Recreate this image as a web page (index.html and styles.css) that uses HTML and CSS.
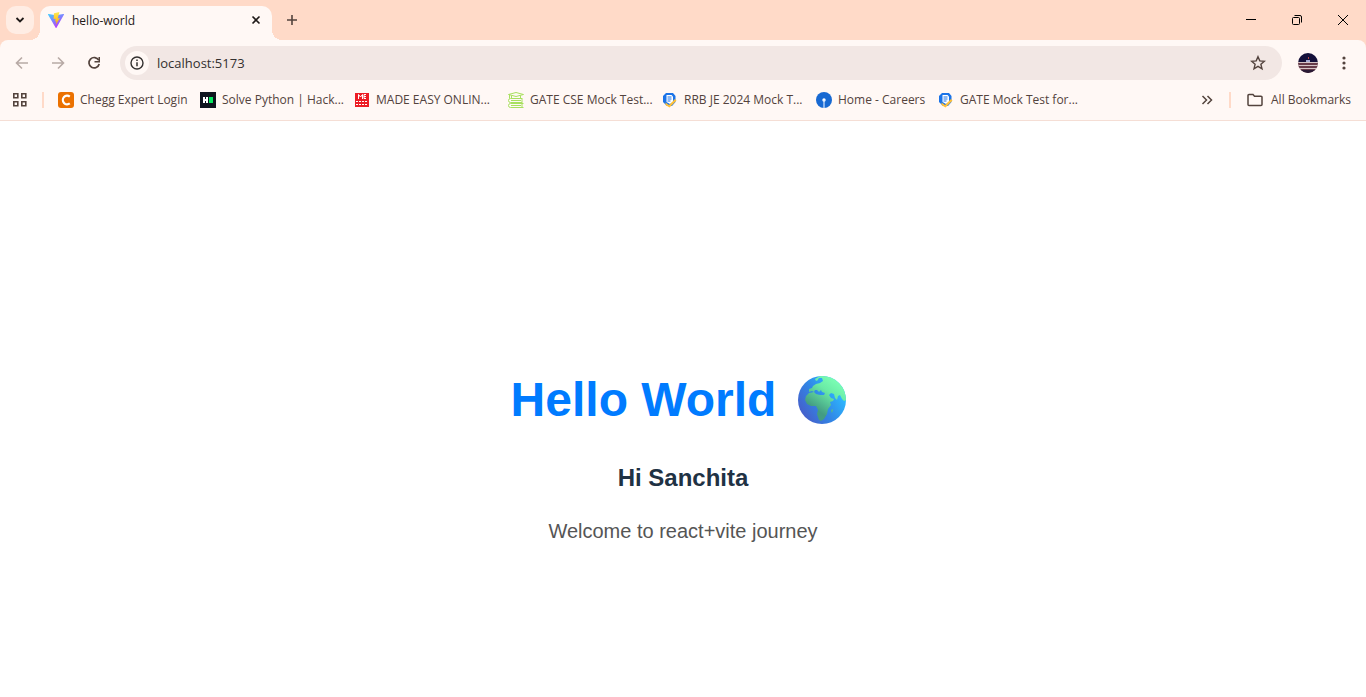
FILE: index.html
```html
<!DOCTYPE html>
<html lang="en">
<head>
<meta charset="utf-8">
<title>hello-world</title>
<link rel="stylesheet" href="styles.css">
</head>
<body>
<header class="browser">
  <div class="tabstrip">
    <button class="tab-search" aria-label="Search tabs"><svg width="10" height="8" viewBox="0 0 10 8"><path d="M1.5 2l3.5 3.500L8.500 2" fill="none" stroke="#1f1a18" stroke-width="1.800"/></svg></button>
    <div class="tab">
      <svg width="16" height="16" viewBox="0 0 32 32"><defs><linearGradient id="vite" x1="0" y1="0" x2=".6" y2="1"><stop offset="0" stop-color="#41d1ff"/><stop offset="1" stop-color="#bd34fe"/></linearGradient><linearGradient id="bolt" x1="0" y1="0" x2="0" y2="1"><stop offset="0" stop-color="#ffea53"/><stop offset="1" stop-color="#ffa800"/></linearGradient></defs><path d="M31.800 5.300L17 31.500a1 1 0 0 1-1.700 0L.2 5.300a1 1 0 0 1 1-1.500L16 6.500l14.700-2.700a1 1 0 0 1 1.100 1.500z" fill="url(#vite)"/><path d="M22.800.2L12 2.300l-.8 11.900 4-.8-1 5.800 2.600-.8-1.500 7.800L23.800 12l-4.300.8z" fill="url(#bolt)"/></svg>
      <span class="tab-title">hello-world</span>
      <button class="tab-close" aria-label="Close tab"><svg width="10" height="10" viewBox="0 0 10 10"><path d="M1.500 1.500l7 7M8.500 1.500l-7 7" stroke="#1f1a18" stroke-width="1.600"/></svg></button>
    </div>
    <button class="new-tab" aria-label="New tab"><svg width="12" height="12" viewBox="0 0 12 12"><path d="M6 1v10M1 6h10" stroke="#53433d" stroke-width="1.600"/></svg></button>
    <div class="window-controls">
      <button aria-label="Minimize"><svg width="12" height="12" viewBox="0 0 12 12"><path d="M1 5.500h10" stroke="#000"/></svg></button>
      <button aria-label="Restore"><svg width="12" height="12" viewBox="0 0 12 12" fill="none" stroke="#000"><rect x="1.500" y="3.500" width="7" height="7" rx="1"/><path d="M3.500 1.500H9a1.500 1.500 0 0 1 1.500 1.500v5.500"/></svg></button>
      <button aria-label="Close"><svg width="12" height="12" viewBox="0 0 12 12"><path d="M1 1l10 10M11 1L1 11" stroke="#000"/></svg></button>
    </div>
  </div>

  <div class="toolbar">
    <button class="tool" aria-label="Back"><svg width="16" height="16" viewBox="0 0 16 16" fill="none" stroke="#b8aaa5" stroke-width="1.600"><path d="M14 8H3M8 2.500L2.500 8 8 13.500"/></svg></button>
    <button class="tool" aria-label="Forward"><svg width="16" height="16" viewBox="0 0 16 16" fill="none" stroke="#b8aaa5" stroke-width="1.600"><path d="M2 8h11M8 2.500L13.500 8 8 13.500"/></svg></button>
    <button class="tool" aria-label="Reload"><svg width="16" height="16" viewBox="0 0 16 16"><path d="M12.700 5.200A5.200 5.200 0 1 0 13.200 9" fill="none" stroke="#53433d" stroke-width="1.700"/><path d="M14 2v5.500H8.500V6h4V2z" fill="#53433d"/></svg></button>
    <div class="omnibox">
      <button class="site-info" aria-label="View site information"><svg width="14" height="14" viewBox="0 0 14 14"><circle cx="7" cy="7" r="6" fill="none" stroke="#33302f" stroke-width="1.400"/><path d="M7 6.200v4M7 3.600v1.500" stroke="#33302f" stroke-width="1.500"/></svg></button>
      <input class="url" type="text" value="localhost:5173" aria-label="Address">
      <button class="star" aria-label="Bookmark this page"><svg width="16" height="16" viewBox="0 0 16 16"><path d="M8 1.700l1.800 4.200 4.600.4-3.500 3 1.100 4.500L8 11.400l-4 2.400 1.100-4.500-3.500-3 4.600-.4z" fill="none" stroke="#53433d" stroke-width="1.400"/></svg></button>
    </div>
    <button class="avatar" aria-label="Profile"><svg width="20" height="20" viewBox="0 0 20 20"><clipPath id="round"><circle cx="10" cy="10" r="10"/></clipPath><g clip-path="url(#round)"><path fill="#14103a" d="M0 0h20v9H0z"/><path fill="#663b49" d="M0 9h20v11H0z"/><path fill="#d5c4c6" d="M0 9h20v1H0zM0 12h20v1H0zM1 15h18v1H1z"/><path fill="#b54646" d="M10 4h1v2h-1z"/><path fill="#a5aad4" d="M8 7h4v2H8z"/><path fill="#2a1a35" d="M2 17h16v3H2z"/></g></svg></button>
    <button class="menu" aria-label="Menu"><svg width="4" height="14" viewBox="0 0 4 14" fill="#53433d"><circle cx="2" cy="2" r="1.600"/><circle cx="2" cy="7" r="1.600"/><circle cx="2" cy="12" r="1.600"/></svg></button>
  </div>

  <nav class="bookmarks" aria-label="Bookmarks">
    <button class="apps" aria-label="Apps"><svg width="16" height="16" viewBox="0 0 16 16" fill="none" stroke="#53433d" stroke-width="1.600"><path d="M1.800 1.800h4v4h-4zM9.800 1.800h4v4h-4zM1.800 9.800h4v4h-4zM9.800 9.800h4v4h-4z"/></svg></button>
    <span class="divider"></span>
    <div class="links">
      <a class="bookmark medium" href="#"><svg width="16" height="16" viewBox="0 0 16 16"><rect width="16" height="16" rx="3" fill="#eb7100"/><path d="M11.800 4.600A4.300 4.300 0 1 0 11.800 11.400" fill="none" stroke="#fff" stroke-width="2.200"/></svg>Chegg Expert Login</a>
      <a class="bookmark" href="#"><svg width="16" height="16" viewBox="0 0 16 16"><path fill="#0e141e" d="M0 0h16v16H0z"/><path fill="#fff" d="M3 5h2v2h1V5h2v6H6V9H5v2H3z"/><path fill="#05e860" d="M9 5h4v6H9z"/></svg>Solve Python | Hack...</a>
      <a class="bookmark" href="#"><svg width="16" height="16" viewBox="0 0 16 16"><path fill="#ed1c24" d="M1 1h14v14H1z"/><path fill="none" stroke="#fff" d="M4.500 7V2.500L6.500 5l2-2.500V7M12 2.500h-2v4h2M10 4.500h2"/><path stroke="#fff" stroke-dasharray="2 1" d="M2 9.500h12M2 12.500h12"/></svg>MADE EASY ONLIN...</a>
      <a class="bookmark" href="#"><svg width="16" height="16" viewBox="0 0 16 16" fill="none" stroke="#a8e05f"><path d="M.5 2.500L8 .5l7.500 2L8 4.500zM3.500 3.500v3h9v-3M1.500 2.500v4M14.500 6.500h-12a1.500 1.500 0 0 0 0 4h12M14 7v3M3 8.500h10M15.500 11.500h-13a2 2 0 0 0 0 4h13M14 12v3M3 13.500h10"/></svg>GATE CSE Mock Test...</a>
      <a class="bookmark" href="#"><svg width="16" height="16" viewBox="0 0 16 16"><path d="M4 1h7l2.500 3v6L10 14H5l-4-4V4z" fill="#1a73e8"/><path d="M4.500 3h5L11 4.500V10L8 12l-3.500-2z" fill="#fff"/><path d="M5.500 5h4M5.500 7h4M5.500 9h3" stroke="#1a73e8"/><path d="M3.500 10.500L7 13l6-6 1.500 1.500-7 7-4-2.500z" fill="#ffc038"/></svg>RRB JE 2024 Mock T...</a>
      <a class="bookmark short" href="#"><svg width="16" height="16" viewBox="0 0 16 16"><circle cx="8" cy="8" r="8" fill="#1769d2"/><circle cx="8" cy="8" r="1.700" fill="#fff"/><path d="M8 8v8" stroke="#d6e7ff" stroke-width="1.200"/></svg>Home - Careers</a>
      <a class="bookmark" href="#"><svg width="16" height="16" viewBox="0 0 16 16"><path d="M4 1h7l2.500 3v6L10 14H5l-4-4V4z" fill="#1a73e8"/><path d="M4.500 3h5L11 4.500V10L8 12l-3.500-2z" fill="#fff"/><path d="M5.500 5h4M5.500 7h4M5.500 9h3" stroke="#1a73e8"/><path d="M3.500 10.500L7 13l6-6 1.500 1.500-7 7-4-2.500z" fill="#ffc038"/></svg>GATE Mock Test for...</a>
    </div>
    <button class="overflow" aria-label="More bookmarks"><svg width="12" height="10" viewBox="0 0 12 10" fill="none" stroke="#53433d" stroke-width="1.500"><path d="M1.500 1L5.500 5l-4 4M6.500 1l4 4-4 4"/></svg></button>
    <span class="divider"></span>
    <button class="all"><svg width="16" height="14" viewBox="0 0 16 14"><path d="M1 2.500a1 1 0 0 1 1-1h4l1.500 1.700H14a1 1 0 0 1 1 1v7.300a1 1 0 0 1-1 1H2a1 1 0 0 1-1-1z" fill="none" stroke="#53433d" stroke-width="1.500"/></svg>All Bookmarks</button>
  </nav>
</header>

<main class="page">
  <h1 class="title"><span>Hello World</span>
    <svg class="globe" width="50" height="50" viewBox="0 0 50 50" role="img" aria-label="Globe"><defs><linearGradient id="sea" x1=".85" y1=".3" x2=".1" y2=".8"><stop offset="0" stop-color="#2db8ff"/><stop offset=".5" stop-color="#3187e6"/><stop offset="1" stop-color="#4560cb"/></linearGradient><linearGradient id="land" x1=".8" y1=".1" x2=".35" y2=".8"><stop offset="0" stop-color="#7dffb5"/><stop offset=".4" stop-color="#6aeba6"/><stop offset="1" stop-color="#439c82"/></linearGradient><clipPath id="earth"><circle cx="25" cy="25" r="24"/></clipPath></defs><circle cx="25" cy="25" r="24" fill="url(#sea)"/><g clip-path="url(#earth)"><path fill="url(#land)" d="M18 4l5-3 8 0 8 3 8 9 3 12-3 1-2-2-2-4-2 1-1 4-2-2-1-4-3-1-2 2 2 3 3 1-1 2-3 1 1 3-3 4-1 5-3 5-3 2-2-1-2-6 1-4-2-4-5 0-4-2-2-4 1-4 3-3 5-1 2 2 4 1 4 0 1-2-3-1-1-2-2 2-2-2-2 0-1 2-2-1-3 1 0-3 3-1 1-2 3-2 4-1 3-2-1-3-3 0-2 3-2-1 1-2zM35 34l1 1-1 3-1-2z"/></g></svg>
  </h1>
  <h2 class="greeting">Hi Sanchita</h2>
  <p class="welcome">Welcome to react+vite journey</p>
</main>
</body>
</html>
```
FILE: styles.css
```css
* { box-sizing: border-box; }
body {
  margin: 0;
  min-height: 100vh;
  display: flex;
  flex-direction: column;
  background: #fff;
  font-family: "Liberation Sans", Arial, sans-serif;
}
svg { display: block; flex: none; }
button {
  display: flex;
  align-items: center;
  justify-content: center;
  flex: none;
  padding: 0;
  border: 0;
  background: none;
  font: inherit;
  color: inherit;
}
.browser {
  background: #ffdac8;
  color: #53433d;
  font-family: "Open Sans", "Noto Sans", sans-serif;
  font-size: 12px;
}
.tabstrip { display: flex; height: 40px; padding-left: 6px; }
.tab-search {
  width: 28px;
  height: 28px;
  margin: 6px 6px 0 0;
  border-radius: 10px;
  background: #ffede4;
}
.tab {
  position: relative;
  display: flex;
  align-items: center;
  gap: 8px;
  width: 232px;
  margin-top: 6px;
  padding: 0 8px 6px;
  border-radius: 10px 10px 0 0;
  background: #fff8f5;
  color: #1f1a18;
}
.tab::before, .tab::after {
  content: "";
  position: absolute;
  bottom: 0;
  width: 10px;
  height: 10px;
}
.tab::before { right: 100%; background: radial-gradient(circle at 0 0, transparent 10px, #fff8f5 10px); }
.tab::after { left: 100%; background: radial-gradient(circle at 100% 0, transparent 10px, #fff8f5 10px); }
.tab-title { flex: 1; }
.tab-close { width: 16px; height: 16px; }
.new-tab { width: 40px; height: 40px; }
.window-controls { display: flex; margin-left: auto; }
.window-controls button { width: 46px; height: 40px; }
.toolbar {
  display: flex;
  align-items: center;
  height: 46px;
  padding: 0 12px 0 4px;
  border-radius: 8px 8px 0 0;
  background: #fff8f5;
}
.tool { width: 36px; height: 34px; }
.omnibox {
  display: flex;
  align-items: center;
  flex: 1;
  height: 34px;
  margin-left: 8px;
  padding: 0 14px 0 5px;
  border-radius: 17px;
  background: #f2e7e4;
}
.site-info {
  width: 24px;
  height: 24px;
  border-radius: 50%;
  background: #fff8f5;
}
.url {
  flex: 1;
  min-width: 0;
  margin-left: 8px;
  padding: 0;
  border: 0;
  outline: 0;
  background: none;
  color: #33302f;
  font: 13px/20px "Open Sans", "Noto Sans", sans-serif;
}
.star { width: 20px; height: 20px; }
.avatar { margin-left: 16px; border-radius: 50%; }
.menu { width: 20px; height: 28px; margin-left: 16px; }
.bookmarks {
  display: flex;
  align-items: center;
  height: 35px;
  padding: 0 15px 7px 12px;
  border-bottom: 1px solid #f5ded5;
  background: #fff8f5;
}
.divider { flex: none; width: 2px; height: 16px; background: #ffdac8; }
.apps { margin-right: 14px; }
.links { display: flex; flex: 1; min-width: 0; margin-left: 14px; overflow: hidden; }
.bookmark {
  display: flex;
  align-items: center;
  flex: none;
  gap: 6px;
  width: 154px;
  color: inherit;
  text-decoration: none;
  white-space: nowrap;
}
.medium { width: 142px; }
.short { width: 122px; }
.overflow { margin-right: 16px; }
.all { gap: 8px; margin-left: 16px; }
.page {
  display: flex;
  flex: 1;
  flex-direction: column;
  align-items: center;
  justify-content: center;
  padding-top: 97px;
  text-align: center;
}
.title, .greeting, .welcome { margin: 0; }
.title {
  display: flex;
  align-items: center;
  gap: 21px;
  padding-right: 8px;
  color: #007bff;
  font-size: 48px;
  line-height: 56px;
}
.greeting { margin-top: 36px; color: #213547; color: #1f3244; font-size: 24px; line-height: 28px; }
.welcome { margin-top: 27px; color: #555; font-size: 20px; line-height: 24px; }
```
